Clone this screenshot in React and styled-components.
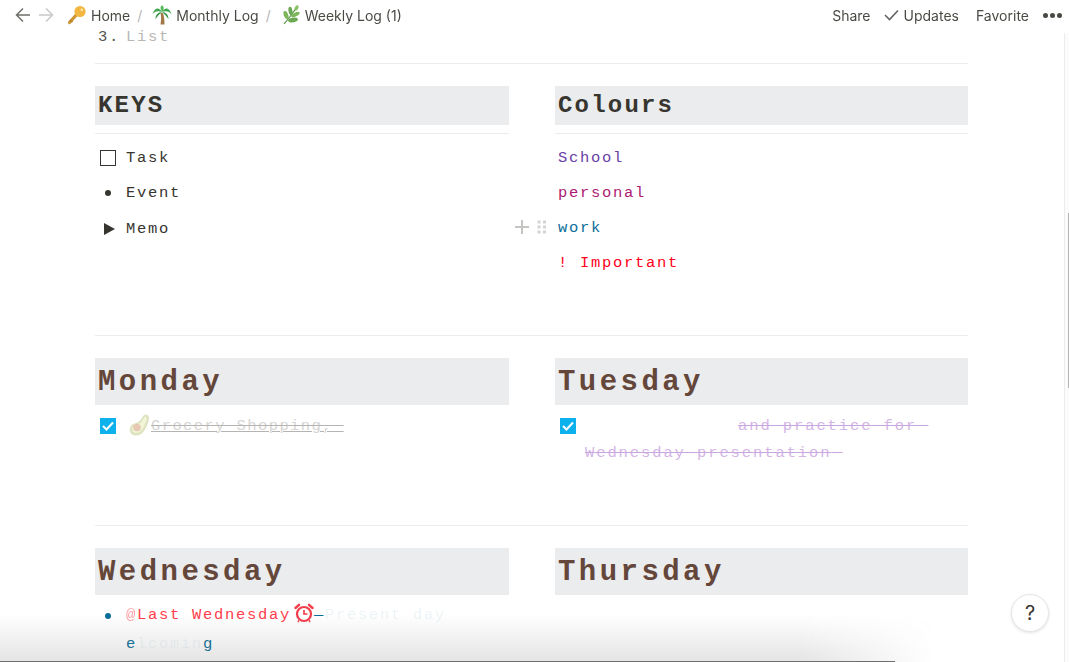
import styled, { createGlobalStyle } from "styled-components";

const GlobalStyle = createGlobalStyle`
  html, body {
    margin: 0;
    padding: 0;
    background: #fff;
    overflow: hidden;
  }
`;

const KeyIcon = () => (
  <svg width="20" height="20" viewBox="0 0 20 20">
    <path d="M2.500 17.500 L11 8" stroke="#c98a1e" strokeWidth="3.200" strokeLinecap="round" />
    <path d="M3 15 L5.500 17" stroke="#b5791a" strokeWidth="2" />
    <circle cx="13" cy="6.500" r="5.600" fill="#f0b02c" />
    <circle cx="14.800" cy="4.800" r="1.400" fill="#fbe39a" />
  </svg>
);

const PalmIcon = () => (
  <svg width="20" height="20" viewBox="0 0 20 20">
    <path d="M8.500 8 C9.500 12 9 16 8.500 19.500 L12.500 19.500 C12.500 15 12 11 11 8 Z" fill="#9a6a35" />
    <path d="M10 7 C7 1.500 2.500 2.500 0.500 9 C4 5.500 7 6 10 7 Z" fill="#2f9e3f" />
    <path d="M10 7 C13 1.500 17.500 2.500 19.500 9 C16 5.500 13 6 10 7 Z" fill="#2f9e3f" />
    <path d="M10 7 C7.500 3 8.500 0.500 10.500 0.500 C12.500 2.500 12 5 10 7 Z" fill="#45b34f" />
    <path d="M10 7 C6 7 3.500 10 3.500 14 C6 10.500 8 8.500 10 7 Z" fill="#1f8a35" />
    <path d="M10 7 C14 7 16.500 10 16.500 14 C14 10.500 12 8.500 10 7 Z" fill="#1f8a35" />
  </svg>
);

const HerbIcon = () => (
  <svg width="20" height="20" viewBox="0 0 20 20">
    <path d="M3 19 C7 14 11 10 15 3" stroke="#4d8f3a" strokeWidth="1.200" fill="none" />
    <ellipse cx="5" cy="10" rx="2.200" ry="4.200" fill="#6fae4a" transform="rotate(-20 5 10)" />
    <ellipse cx="9.500" cy="6" rx="2" ry="4.200" fill="#5c9f42" transform="rotate(-10 9.500 6)" />
    <ellipse cx="15.500" cy="3" rx="1.700" ry="3" fill="#7fba55" transform="rotate(25 15.500 3)" />
    <ellipse cx="14.500" cy="9.500" rx="4.500" ry="2" fill="#6fae4a" transform="rotate(-25 14.500 9.500)" />
    <ellipse cx="12" cy="15" rx="5" ry="2.200" fill="#5c9f42" transform="rotate(-10 12 15)" />
  </svg>
);

const AvocadoIcon = () => (
  <svg width="21" height="22" viewBox="0 0 21 22">
    <path d="M17 0.500 C21 1 20.500 6 18.500 10 C16.500 16 13 21.500 7 21.500 C2.500 21.500 0 18 1 14 C2 9.500 7 9.500 10 7.500 C13 5.500 13.500 0.500 17 0.500 Z" fill="#d0daa8" opacity="0.75" />
    <path d="M16.500 2.500 C18.500 3.500 17.500 7 16 10 C14 15.500 11 19 7 19 C4 19 2.500 16 3.500 13.500 C5 10.500 9 10.500 12 8.500 C14 6.500 14.500 2.500 16.500 2.500 Z" fill="#f3f4d8" />
    <circle cx="8" cy="13.500" r="3.800" fill="#e6c8b3" />
  </svg>
);

const AlarmIcon = () => (
  <svg width="20" height="20" viewBox="0 0 20 20" fill="none" stroke="#f23d4a">
    <circle cx="10" cy="11" r="7" strokeWidth="2.200" />
    <path d="M10 7 V11 H13.500" strokeWidth="1.700" />
    <path d="M1.500 5 L5 1.800 M18.500 5 L15 1.800" strokeWidth="2.400" strokeLinecap="round" />
    <path d="M5 17.500 L3.800 19 M15 17.500 L16.200 19" strokeWidth="1.500" />
  </svg>
);

const DragDots = () => (
  <svg width="10" height="14" viewBox="0 0 10 14" fill="#d4d4d2">
    <rect x="0.500" y="0.500" width="3" height="3" />
    <rect x="6" y="0.500" width="3" height="3" />
    <rect x="0.500" y="5.500" width="3" height="3" />
    <rect x="6" y="5.500" width="3" height="3" />
    <rect x="0.500" y="10.500" width="3" height="3" />
    <rect x="6" y="10.500" width="3" height="3" />
  </svg>
);

const Page = styled.div`
  position: relative;
  width: 1069px;
  height: 662px;
  overflow: hidden;
  background: #fff;
  font-family: "Inter", "Liberation Sans", sans-serif;
`;

const TopBar = styled.header`
  height: 30px;
  display: flex;
  align-items: center;
  padding: 0 6px 0 15px;
  font-size: 14px;
  color: #37352f;
  background: #fff;
`;

const NavArrow = styled.svg`
  width: 16px;
  height: 16px;
  margin-right: ${(p) => p.$gap}px;
  fill: none;
  stroke: ${(p) => (p.$off ? "#c9c9c7" : "#6f6e69")};
  stroke-width: 1.500;
`;

const Crumb = styled.span`
  display: flex;
  align-items: center;
  gap: 4px;
  opacity: 0.9;
  white-space: nowrap;
`;

const Slash = styled.span`
  color: #b7b6b3;
  margin: 0 10px 0 7px;
`;

const TopActions = styled.div`
  margin-left: auto;
  display: flex;
  align-items: center;
  opacity: 0.9;
`;

const TopAction = styled.span`
  display: flex;
  align-items: center;
  gap: 5px;
  margin-left: ${(p) => p.$gap}px;
`;

const Dots = styled.span`
  display: flex;
  gap: 2px;
  margin-left: 14px;
  width: 20px;
  i {
    width: 5px;
    height: 5px;
    border-radius: 50%;
    background: #37352f;
  }
`;

const Content = styled.main`
  width: 873px;
  margin-left: 95px;
  font-family: "Liberation Mono", monospace;
  font-size: 15.500px;
  letter-spacing: 1.700px;
  color: #37352f;
`;

const ClippedLine = styled.div`
  height: 15px;
  padding-left: 3px;
  line-height: 15px;
  color: #b8b7b4;
  b {
    font-weight: 400;
    color: #55534e;
    margin-right: 6px;
  }
`;

const Divider = styled.hr`
  border: 0;
  height: 1px;
  margin: ${(p) => p.$top}px 0 ${(p) => p.$bottom}px;
  background: #ececeb;
`;

const Columns = styled.section`
  display: grid;
  grid-template-columns: 414px 413px;
  column-gap: 46px;
  height: ${(p) => p.$height}px;
`;

const Heading = styled.h2`
  margin: 0;
  height: ${(p) => (p.$large ? 47 : 39)}px;
  line-height: ${(p) => (p.$large ? 49 : 40)}px;
  padding-left: 3px;
  background: #ebeced;
  font-size: ${(p) => (p.$large ? 29 : 24)}px;
  font-weight: 700;
  letter-spacing: ${(p) => (p.$large ? 3.450 : 2.200)}px;
  color: ${(p) => (p.$brown ? "#64473a" : "#37352f")};
`;

const KeyRule = styled.hr`
  border: 0;
  height: 1px;
  margin: 8px 0 6px;
  background: #ececeb;
`;

const Row = styled.div`
  position: relative;
  display: flex;
  align-items: center;
  box-sizing: border-box;
  height: 35px;
  padding-left: 3px;
  padding-top: ${(p) => p.$drop || 0}px;
  color: ${(p) => p.$color || "inherit"};
`;

const Marker = styled.span`
  width: 28px;
  flex: none;
  display: flex;
  align-items: center;
`;

const Square = styled.span`
  width: 14px;
  height: 14px;
  border: 1.500px solid #37352f;
  margin-left: 2px;
`;

const Dot = styled.span`
  width: 6px;
  height: 6px;
  border-radius: 50%;
  background: #37352f;
  margin-left: 7px;
`;

const Triangle = styled.span`
  width: 0;
  height: 0;
  margin-left: 6px;
  border-left: 11px solid #37352f;
  border-top: 6px solid transparent;
  border-bottom: 6px solid transparent;
`;

const Handle = styled.span`
  position: absolute;
  left: -40px;
  top: 10px;
  display: flex;
  align-items: center;
  gap: 8px;
`;

const Todo = styled.div`
  position: relative;
  padding: ${(p) => p.$top}px 0 0 30px;
  line-height: 27px;
  white-space: nowrap;
`;

const Checked = styled.span`
  position: absolute;
  left: 5px;
  top: 13px;
  width: 16px;
  height: 16px;
  background: #0db1ec;
  display: flex;
  align-items: center;
  justify-content: center;
`;

const Done = styled.span`
  color: ${(p) => p.$color};
  letter-spacing: ${(p) => p.$spacing}px;
  text-decoration: line-through ${(p) => (p.$underlined ? "underline" : "")};
  text-decoration-color: ${(p) => p.$line};
  text-decoration-thickness: 1px;
`;

const AvocadoSlot = styled.span`
  position: absolute;
  left: 34px;
  top: 9px;
  display: flex;
`;

const Hidden = styled.span`
  display: inline-block;
  width: ${(p) => p.$width}px;
`;

const Bullet = styled.div`
  position: relative;
  padding: 6px 0 0 31px;
  line-height: 29px;
  white-space: nowrap;
`;

const BulletDot = styled.span`
  position: absolute;
  left: 10px;
  top: 18px;
  width: 6px;
  height: 6px;
  border-radius: 50%;
  background: #0b6e99;
`;

const Reminder = styled.span`
  color: #ff3d4d;
  i {
    font-style: normal;
    opacity: 0.5;
  }
`;

const AlarmSlot = styled.span`
  display: inline-flex;
  vertical-align: -4px;
  margin-left: 3px;
`;

const Smudged = styled.span`
  color: #0b6e99;
  i {
    font-style: normal;
    opacity: ${(p) => p.$fade};
    filter: blur(0.7px);
  }
`;

const HelpButton = styled.button`
  position: absolute;
  right: 20px;
  bottom: 30px;
  width: 38px;
  height: 38px;
  border-radius: 50%;
  border: 1px solid #e6e6e5;
  background: #fff;
  box-shadow: 0 1px 3px rgba(15, 15, 15, 0.12);
  font-family: "Inter", sans-serif;
  font-size: 20px;
  color: #37352f;
  padding: 0;
`;

const ScrollEdge = styled.div`
  position: absolute;
  top: 33px;
  bottom: 0;
  right: 0;
  width: 4px;
  background: #fbfbfb;
  border-left: 1px solid #ececec;
`;

const ScrollThumb = styled.div`
  position: absolute;
  top: 213px;
  right: 0;
  width: 1px;
  height: 175px;
  background: #b5b5b5;
`;

const BottomShade = styled.div`
  position: absolute;
  left: 0;
  bottom: 0;
  width: 935px;
  height: 48px;
  background: linear-gradient(to bottom, rgba(120, 120, 120, 0), rgba(120, 120, 120, 0.2));
  mask-image: linear-gradient(to right, #000 86%, transparent);
  pointer-events: none;
`;

const BottomLine = styled.div`
  position: absolute;
  left: 0;
  bottom: 0;
  width: 895px;
  height: 1px;
  background: #6e6e6e;
`;

const Tick = () => (
  <svg width="12" height="10" viewBox="0 0 12 10" fill="none" stroke="#fff" strokeWidth="2">
    <path d="M1 5 L4.500 8.500 L11 1.500" />
  </svg>
);

export default function App() {
  return (
    <Page>
      <GlobalStyle />
      <TopBar>
        <NavArrow viewBox="0 0 16 16" $gap={7}>
          <path d="M15 8 H1.500 M8 1.500 L1.500 8 L8 14.500" />
        </NavArrow>
        <NavArrow viewBox="0 0 16 16" $gap={13} $off>
          <path d="M1 8 H14.500 M8 1.500 L14.500 8 L8 14.500" />
        </NavArrow>
        <Crumb>
          <KeyIcon />
          Home
        </Crumb>
        <Slash>/</Slash>
        <Crumb>
          <PalmIcon />
          Monthly Log
        </Crumb>
        <Slash>/</Slash>
        <Crumb>
          <HerbIcon />
          Weekly Log (1)
        </Crumb>
        <TopActions>
          <TopAction>Share</TopAction>
          <TopAction $gap={13}>
            <svg width="15" height="12" viewBox="0 0 15 12" fill="none" stroke="#55534e" strokeWidth="1.600">
              <path d="M1 6 L5.500 10.500 L14 1.500" />
            </svg>
            Updates
          </TopAction>
          <TopAction $gap={17}>Favorite</TopAction>
          <Dots>
            <i />
            <i />
            <i />
          </Dots>
        </TopActions>
      </TopBar>
      <Content>
        <ClippedLine>
          <b>3.</b>List
        </ClippedLine>
        <Divider $top={18} $bottom={22} />
        <Columns $height={249}>
          <div>
            <Heading>KEYS</Heading>
            <KeyRule />
            <Row>
              <Marker>
                <Square />
              </Marker>
              Task
            </Row>
            <Row>
              <Marker>
                <Dot />
              </Marker>
              Event
            </Row>
            <Row $drop={3}>
              <Marker>
                <Triangle />
              </Marker>
              Memo
            </Row>
          </div>
          <div>
            <Heading>Colours</Heading>
            <KeyRule />
            <Row $color="#6940a5">School</Row>
            <Row $color="#ad1a72">personal</Row>
            <Row $color="#0b6e99">
              <Handle>
                <svg width="14" height="14" viewBox="0 0 14 14" stroke="#c4c4c2" strokeWidth="2">
                  <path d="M7 0 V14 M0 7 H14" />
                </svg>
                <DragDots />
              </Handle>
              work
            </Row>
            <Row $color="#ff001a">! Important</Row>
          </div>
        </Columns>
        <Divider $top={0} $bottom={22} />
        <Columns $height={167}>
          <div>
            <Heading $large $brown>
              Monday
            </Heading>
            <Todo $top={8}>
              <Checked>
                <Tick />
              </Checked>
              <AvocadoSlot>
                <AvocadoIcon />
              </AvocadoSlot>
              <Hidden $width={26} />
              <Done $color="#d6d5d3" $line="#b5b4b2" $spacing={1.4} $underlined>
                Grocery Shopping,{"\u00a0"}
              </Done>
            </Todo>
          </div>
          <div>
            <Heading $large $brown>
              Tuesday
            </Heading>
            <Todo $top={8}>
              <Checked>
                <Tick />
              </Checked>
              <Hidden $width={153} />
              <Done $color="#d3b5e6" $line="#c9a6df" $spacing={1.900}>
                and practice for{"\u00a0"}
                <br />
                Wednesday presentation{"\u00a0"}
              </Done>
            </Todo>
          </div>
        </Columns>
        <Divider $top={0} $bottom={22} />
        <Columns $height={120}>
          <div>
            <Heading $large $brown>
              Wednesday
            </Heading>
            <Bullet>
              <BulletDot />
              <Reminder>
                <i>@</i>Last Wednesday
              </Reminder>
              <AlarmSlot>
                <AlarmIcon />
              </AlarmSlot>
              <Smudged $fade={0.07}>
                —<i>Present day</i>
              </Smudged>
              <br />
              <Smudged $fade={0.06}>
                e<i>lcomin</i>g
              </Smudged>
            </Bullet>
          </div>
          <div>
            <Heading $large $brown>
              Thursday
            </Heading>
          </div>
        </Columns>
      </Content>
      <ScrollEdge />
      <ScrollThumb />
      <BottomShade />
      <BottomLine />
      <HelpButton>?</HelpButton>
    </Page>
  );
}
